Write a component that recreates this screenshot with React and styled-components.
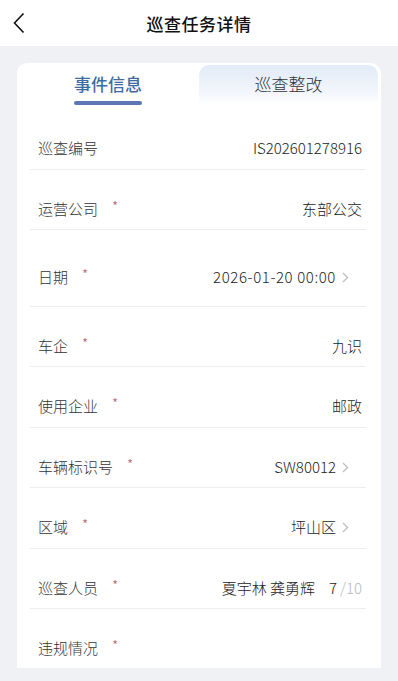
import React from 'react';
import styled, { createGlobalStyle } from 'styled-components';

const GlobalStyle = createGlobalStyle`
  html, body {
    margin: 0;
    padding: 0;
    background: #f0f1f4;
    font-family: "Noto Sans CJK SC", "Noto Sans", sans-serif;
  }
`;

const Page = styled.div`
  width: 398px;
  min-height: 681px;
  background: #f0f1f4;
`;

const Header = styled.div`
  height: 46px;
  background: #fff;
  display: flex;
  align-items: center;
  justify-content: center;
  position: relative;
`;

const BackButton = styled.div`
  position: absolute;
  left: 13px;
  top: 11px;
  width: 16px;
  height: 24px;
  display: flex;
  align-items: center;
`;

const Title = styled.h1`
  margin: 0;
  font-size: 17px;
  font-weight: 500;
  color: #111;
  letter-spacing: 0.5px;
`;

const Body = styled.div`
  padding: 17px 17px 0;
`;

const Card = styled.div`
  background: #fff;
  border-radius: 10px 10px 0 0;
  padding: 2px 3px 0 0;
`;

const Tabs = styled.div`
  display: grid;
  grid-template-columns: 182px 1fr;
  height: 40px;
`;

const Tab = styled.div`
  position: relative;
  display: flex;
  justify-content: center;
  align-items: center;
  padding-bottom: 4px;
  font-size: 17px;
  font-weight: ${p => (p.$active ? 500 : 300)};
  color: ${p => (p.$active ? '#3f6b9f' : '#333')};
  border-radius: 10px 10px 0 0;
  background: ${p => (p.$active ? '#fff' : 'linear-gradient(180deg, #e2ebf8 0%, #f3f6fb 70%, #ffffff 100%)')};
`;

const Underline = styled.span`
  position: absolute;
  bottom: 0;
  left: 50%;
  transform: translateX(-50%);
  width: 68px;
  height: 4px;
  border-radius: 2px;
  background: #5a76b4;
`;

const List = styled.div`
  padding: 0 12px 0 13px;
`;

const Row = styled.div`
  display: flex;
  align-items: center;
  justify-content: space-between;
  padding: ${p => p.$pad};
  line-height: 22px;
  font-size: 15px;
  font-weight: 300;
  color: #333;
  border-bottom: ${p => (p.$last ? 'none' : '1px solid #eeeeee')};
`;

const Label = styled.div`
  display: flex;
  align-items: center;
  padding-left: 1px;
`;

const Star = styled.span`
  color: #b25a6e;
  font-size: 14px;
  line-height: 14px;
  margin-left: 14px;
  margin-top: -7px;
`;

const Value = styled.div`
  display: flex;
  align-items: center;
  color: #222;
  font-size: 15px;
  white-space: pre;
  letter-spacing: ${p => (p.$wide ? '0.6px' : 'normal')};
`;

const Arrow = styled.span`
  display: inline-flex;
  margin-left: 6px;
  margin-right: 13px;
`;

const Count = styled.span`
  margin-left: 14px;
  color: #222;
`;

const Total = styled.span`
  color: #b8b8b8;
  margin-left: 3px;
`;

const Chevron = () => (
  <Arrow>
    <svg width="7" height="11" viewBox="0 0 7 11">
      <path d="M1 1l4.5 4.5L1 10" fill="none" stroke="#bdbdbd" strokeWidth="1.3" />
    </svg>
  </Arrow>
);

const rows = [
  { label: '巡查编号', value: 'IS202601278916', pad: '32px 4px 10px 7px' },
  { label: '运营公司', required: true, value: '东部公交' },
  { label: '日期', required: true, value: '2026-01-20 00:00', arrow: true, pad: '36px 4px 18px 7px', wide: true },
  { label: '车企', required: true, value: '九识' },
  { label: '使用企业', required: true, value: '邮政', pad: '28px 4px 10px 7px' },
  { label: '车辆标识号', required: true, value: 'SW80012', arrow: true },
  { label: '区域', required: true, value: '坪山区', arrow: true, pad: '28px 4px 10px 7px' },
  { label: '巡查人员', required: true, value: '夏宇林 龚勇辉', count: 7, total: 10 },
  { label: '违规情况', required: true, value: '', last: true },
];

export default function App() {
  return (
    <Page>
      <GlobalStyle />
      <Header>
        <BackButton>
          <svg width="12" height="22" viewBox="0 0 12 22">
            <path d="M10.5 1.5L1.5 11l9 9.5" fill="none" stroke="#111" strokeWidth="1.6" />
          </svg>
        </BackButton>
        <Title>巡查任务详情</Title>
      </Header>
      <Body>
        <Card>
          <Tabs>
            <Tab $active>
              事件信息
              <Underline />
            </Tab>
            <Tab>巡查整改</Tab>
          </Tabs>
          <List>
            {rows.map(r => (
              <Row key={r.label} $pad={r.pad || '28px 4px 9px 7px'} $last={r.last}>
                <Label>
                  {r.label}
                  {r.required && <Star>*</Star>}
                </Label>
                <Value $wide={r.wide}>
                  {r.value}
                  {r.count !== undefined && (
                    <>
                      <Count>{r.count}</Count>
                      <Total>/{r.total}</Total>
                    </>
                  )}
                  {r.arrow && <Chevron />}
                </Value>
              </Row>
            ))}
          </List>
        </Card>
      </Body>
    </Page>
  );
}
